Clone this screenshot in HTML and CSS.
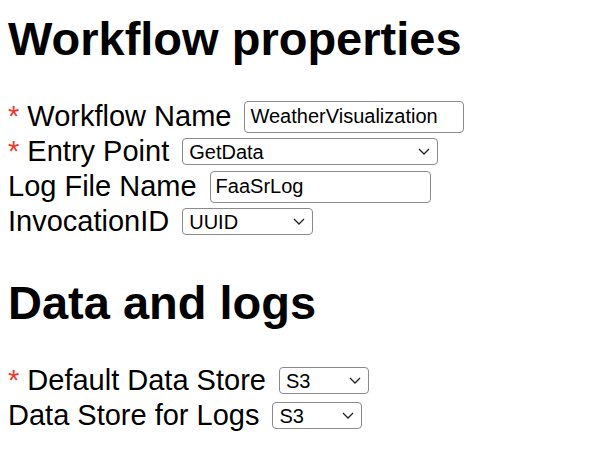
FILE: index.html
```html
<!DOCTYPE html>
<html>
<head>
<meta charset="utf-8">
<link rel="stylesheet" href="styles.css">
</head>
<body>
<h1 class="title">Workflow properties</h1>
<div class="rows">
  <div class="row">
    <label class="label"><span class="req">*</span> Workflow Name</label>
    <input class="text-input w-name" type="text" value="WeatherVisualization">
  </div>
  <div class="row">
    <label class="label"><span class="req">*</span> Entry Point</label>
    <div class="select-wrap w-entry">
      <select class="select"><option>GetData</option></select>
      <svg class="chev" width="12" height="7" viewBox="0 0 12 7"><polyline points="1,1 6,6 11,1" fill="none" stroke="#222" stroke-width="1.3"/></svg>
    </div>
  </div>
  <div class="row">
    <label class="label">Log File Name</label>
    <input class="text-input w-log" type="text" value="FaaSrLog">
  </div>
  <div class="row">
    <label class="label">InvocationID</label>
    <div class="select-wrap w-inv">
      <select class="select"><option>UUID</option></select>
      <svg class="chev" width="12" height="7" viewBox="0 0 12 7"><polyline points="1,1 6,6 11,1" fill="none" stroke="#222" stroke-width="1.3"/></svg>
    </div>
  </div>
</div>
<h1 class="title second">Data and logs</h1>
<div class="rows">
  <div class="row">
    <label class="label"><span class="req">*</span> Default Data Store</label>
    <div class="select-wrap w-store">
      <select class="select"><option>S3</option></select>
      <svg class="chev" width="12" height="7" viewBox="0 0 12 7"><polyline points="1,1 6,6 11,1" fill="none" stroke="#222" stroke-width="1.3"/></svg>
    </div>
  </div>
  <div class="row">
    <label class="label">Data Store for Logs</label>
    <div class="select-wrap w-store">
      <select class="select"><option>S3</option></select>
      <svg class="chev" width="12" height="7" viewBox="0 0 12 7"><polyline points="1,1 6,6 11,1" fill="none" stroke="#222" stroke-width="1.3"/></svg>
    </div>
  </div>
</div>
</body>
</html>
```
FILE: styles.css
```css
html, body {
  background: #ffffff;
}
body {
  margin: 0;
  padding: 0 8px;
  font-family: "Liberation Sans", Arial, sans-serif;
  color: #000;
}
.title {
  font-size: 47px;
  font-weight: bold;
  line-height: 54px;
  margin: 12px 0 33px 0;
}
.title.second {
  margin: 37px 0 33px 0;
}
.rows {
  display: flex;
  flex-direction: column;
}
.row {
  display: flex;
  align-items: center;
  gap: 13px;
  height: 35px;
}
.label {
  font-size: 29px;
  line-height: 35px;
  white-space: nowrap;
}
.req {
  color: #ee3b2f;
}
.text-input {
  box-sizing: border-box;
  height: 32px;
  padding: 0 5px;
  border: 1px solid #8a8a8a;
  border-radius: 4px;
  font-family: "Liberation Sans", Arial, sans-serif;
  font-size: 20px;
  color: #000;
  background: #fff;
  outline: none;
}
.w-name { width: 220px; }
.w-log { width: 221px; }
.select-wrap {
  position: relative;
  display: flex;
}
.select {
  -webkit-appearance: none;
  appearance: none;
  box-sizing: border-box;
  width: 100%;
  height: 27px;
  padding: 0 24px 0 6px;
  border: 1px solid #8a8a8a;
  border-radius: 4px;
  background: #fff;
  font-family: "Liberation Sans", Arial, sans-serif;
  font-size: 20px;
  color: #000;
  outline: none;
}
.chev {
  position: absolute;
  right: 8px;
  top: 10px;
  pointer-events: none;
}
.w-entry { width: 256px; }
.w-inv { width: 131px; }
.w-store { width: 90px; }
```
